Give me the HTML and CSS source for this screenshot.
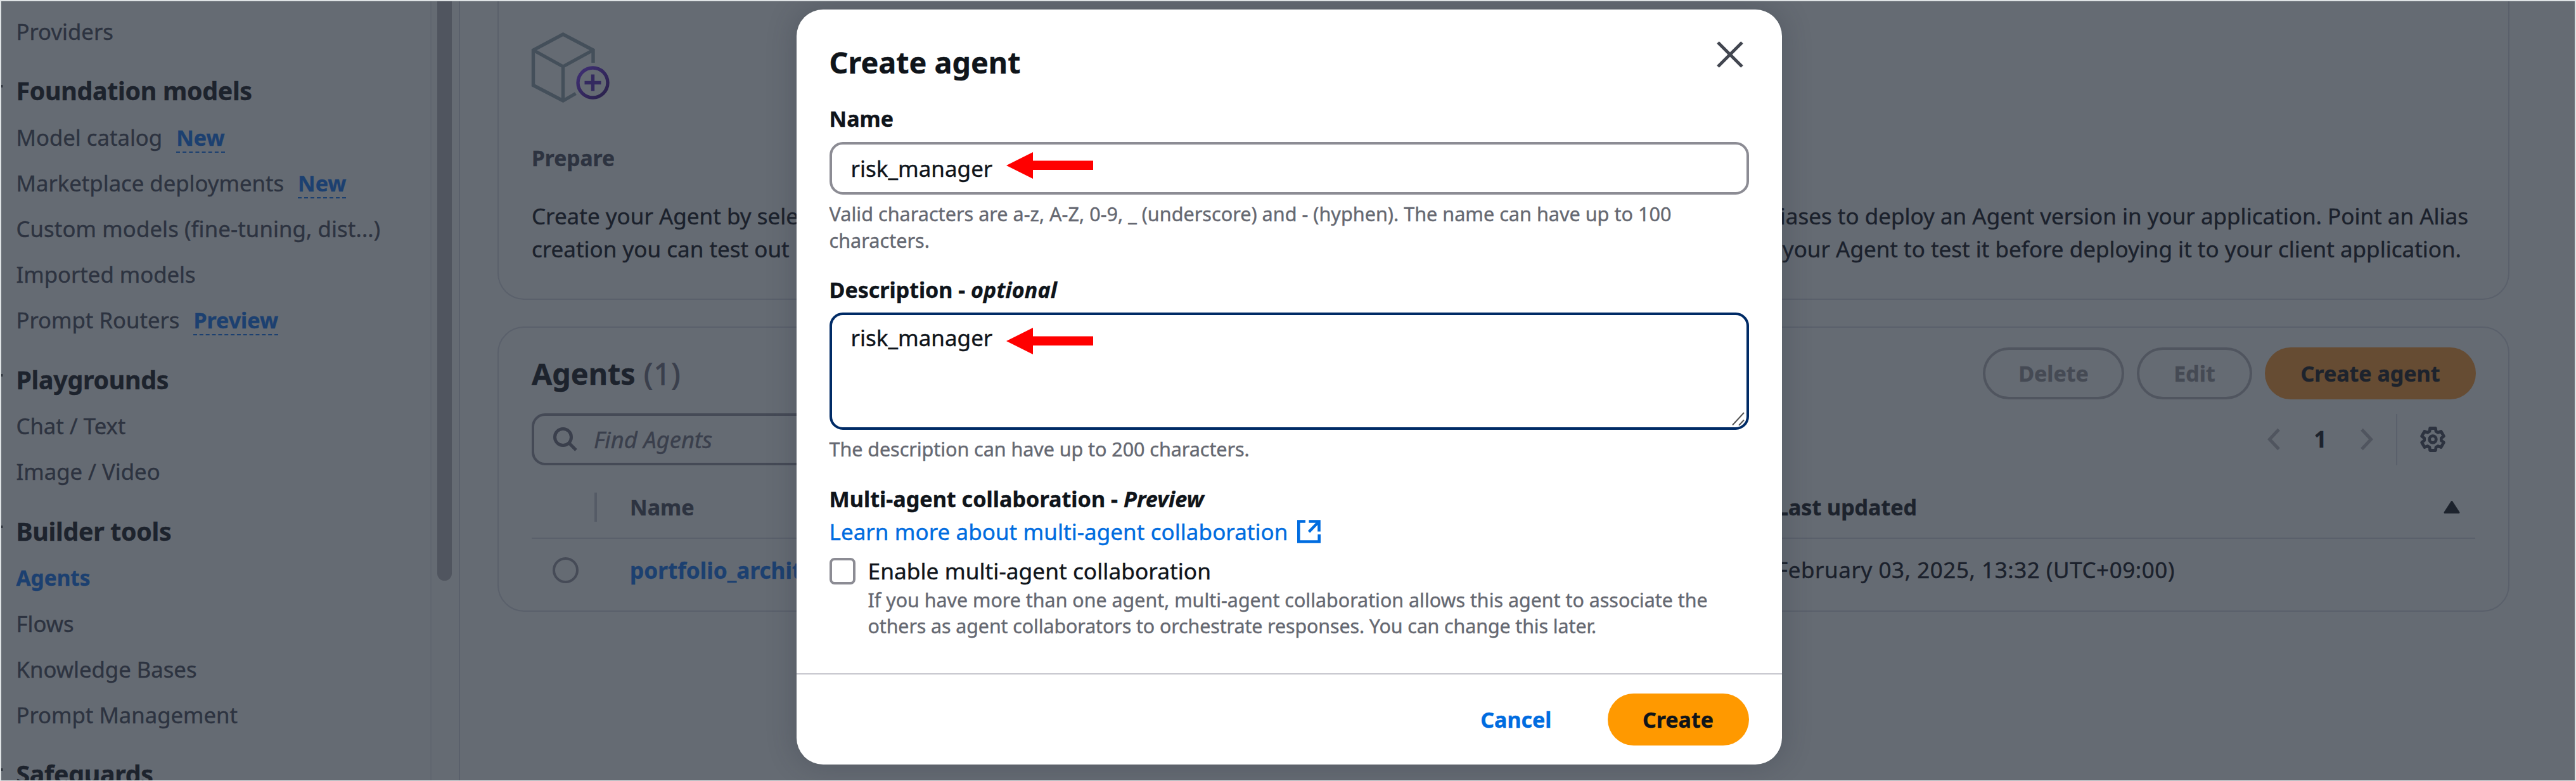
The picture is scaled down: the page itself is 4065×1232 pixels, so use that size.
FILE: index.html
```html
<!DOCTYPE html>
<html lang="en">
<head>
<meta charset="utf-8">
<title>Create agent</title>
<link rel="stylesheet" href="styles.css">
</head>
<body>
<div class="page">
  <nav class="sidebar">
    <div class="nav-list">
      <a class="nav-item">Providers</a>
      <h2 class="nav-heading">Foundation models</h2>
      <a class="nav-item">Model catalog<span class="badge">New</span></a>
      <a class="nav-item">Marketplace deployments<span class="badge">New</span></a>
      <a class="nav-item nav-item-wide">Custom models (fine-tuning, dist...)</a>
      <a class="nav-item">Imported models</a>
      <a class="nav-item">Prompt Routers<span class="badge">Preview</span></a>
      <h2 class="nav-heading">Playgrounds</h2>
      <a class="nav-item">Chat / Text</a>
      <a class="nav-item">Image / Video</a>
      <h2 class="nav-heading">Builder tools</h2>
      <a class="nav-item nav-item-active">Agents</a>
      <a class="nav-item">Flows</a>
      <a class="nav-item">Knowledge Bases</a>
      <a class="nav-item">Prompt Management</a>
      <h2 class="nav-heading">Safeguards</h2>
    </div>
    <div class="scroll-track"><div class="scroll-thumb"></div></div>
  </nav>

  <main class="main">
    <section class="card card-intro">
      <div class="intro-col">
        <svg class="cube" viewBox="0 0 124 112" fill="none">
          <defs><linearGradient id="plus" x1="0" y1="0" x2="1" y2="1"><stop offset="0" stop-color="#3f2f74"/><stop offset="1" stop-color="#29214a"/></linearGradient></defs>
          <path d="M97 49V29L49.500 4 2.500 29v55.500L49.500 109l20-11.500M2.500 29l47 26L97 29M49.500 55v54" stroke="#444f5a" stroke-width="5.400"/>
          <circle cx="96.500" cy="80.500" r="23.500" stroke="url(#plus)" stroke-width="5.400"/>
          <path d="M83.500 80.500h26M96.500 67.500v26" stroke="#33295f" stroke-width="5.400"/>
        </svg>
        <h3 class="intro-title">Prepare</h3>
        <p class="intro-text">Create your Agent by selecting<br>creation you can test out</p>
      </div>
      <div class="intro-col intro-col-right">
        <p class="intro-text">Aliases to deploy an Agent version in your application. Point an Alias</p>
        <p class="intro-text intro-text-last">your Agent to test it before deploying it to your client application.</p>
      </div>
    </section>

    <section class="card card-agents">
      <div class="agents-header">
        <h2 class="agents-title">Agents <span class="count">(1)</span></h2>
        <div class="actions">
          <button class="btn btn-disabled btn-delete">Delete</button>
          <button class="btn btn-disabled btn-edit">Edit</button>
          <button class="btn btn-dim btn-create-agent">Create agent</button>
        </div>
      </div>
      <div class="tools">
        <div class="search">
          <svg class="search-icon" viewBox="0 0 40 40" fill="none" stroke="#3a3f4c" stroke-width="5"><circle cx="16.500" cy="16.500" r="13"/><path d="M25.500 25.500L37 37"/></svg>
          <span class="placeholder">Find Agents</span>
        </div>
        <div class="pager">
          <svg class="chev" viewBox="0 0 20 36" fill="none" stroke="#50555f" stroke-width="5"><path d="M18 2.500L3.500 18 18 33.500"/></svg>
          <span class="page-number">1</span>
          <svg class="chev" viewBox="0 0 20 36" fill="none" stroke="#50555f" stroke-width="5"><path d="M2 2.500L16.500 18 2 33.500"/></svg>
          <span class="pager-rule"></span>
          <svg class="gear" viewBox="-21 -21 42 42" fill="none" stroke="#2d3340" stroke-linejoin="round"><path stroke-width="4.800" d="M-5.060-12.500L-4.350-17.500H4.350L5.060-12.500 8.300-10.630 12.980-12.520 17.330-4.980 13.360-1.870V1.870L17.330 4.980 12.980 12.520 8.300 10.630 5.060 12.500 4.350 17.500H-4.350L-5.060 12.500-8.300 10.630-12.980 12.520-17.330 4.980-13.360 1.870V-1.870L-17.330-4.980-12.980-12.520-8.300-10.630Z"/><circle r="5.300" stroke-width="4.800"/></svg>
        </div>
      </div>
      <div class="table">
        <div class="row row-head">
          <div class="cell cell-select"><span class="col-divider"></span></div>
          <div class="cell cell-name">Name</div>
          <div class="cell cell-updated">Last updated<svg class="sort" viewBox="0 0 26 22" fill="#1d232d" stroke="#1d232d" stroke-width="3" stroke-linejoin="round"><path d="M13 2.500L24 19.500H2Z"/></svg></div>
        </div>
        <div class="row">
          <div class="cell cell-radio"><span class="radio"></span></div>
          <div class="cell cell-name cell-link">portfolio_architect</div>
          <div class="cell cell-date">February 03, 2025, 13:32 (UTC+09:00)</div>
        </div>
      </div>
    </section>
  </main>

  <div class="modal" role="dialog">
    <header class="modal-header">
      <h1 class="modal-title">Create agent</h1>
      <svg class="close" viewBox="0 0 42 42" stroke="#424650" stroke-width="5"><path d="M2 2L40 40M40 2L2 40"/></svg>
    </header>
    <div class="modal-body">
      <label class="label">Name</label>
      <div class="field input">risk_manager<svg class="arrow arrow-name" viewBox="0 0 137 42" fill="#f00"><path d="M0 21L42 0V13.500H137V28H42V42Z"/></svg></div>
      <p class="hint">Valid characters are a-z, A-Z, 0-9, _ (underscore) and - (hyphen). The name can have up to 100<br>characters.</p>
      <label class="label">Description - <i>optional</i></label>
      <div class="field textarea">risk_manager<svg class="arrow arrow-desc" viewBox="0 0 137 42" fill="#f00"><path d="M0 21L42 0V13.500H137V28H42V42Z"/></svg><svg class="grip" viewBox="0 0 20 22" stroke="#555" stroke-width="2"><path d="M1 20.500L19 1M11 21L19 12.500"/></svg></div>
      <p class="hint hint-desc">The description can have up to 200 characters.</p>
      <label class="label label-multi">Multi-agent collaboration - <i>Preview</i></label>
      <a class="learn">Learn more about multi-agent collaboration<svg class="external" viewBox="0 0 37 37" fill="none" stroke="#006ce0" stroke-width="4.600"><path d="M13 2.500H2.300V34.500H34.700V23M18.500 2.500H34.500V18.500M34 3L18.500 19"/></svg></a>
      <div class="check-row">
        <span class="checkbox"></span>
        <div>
          <div class="check-label">Enable multi-agent collaboration</div>
          <p class="check-help">If you have more than one agent, multi-agent collaboration allows this agent to associate the<br><span class="help-last">others as agent collaborators to orchestrate responses. You can change this later.</span></p>
        </div>
      </div>
    </div>
    <footer class="modal-footer">
      <button class="btn-link">Cancel</button>
      <button class="btn btn-primary">Create</button>
    </footer>
  </div>
</div>
</body>
</html>
```
FILE: styles.css
```css
* { box-sizing: border-box; margin: 0; padding: 0; }
body { font-family: "Noto Sans", "Open Sans", sans-serif; font-size: 35px; line-height: 52px; background: #656b73; -webkit-text-stroke: .4px; }
button { font-family: inherit; border: 0; background: none; }
svg { display: block; flex: none; overflow: visible; }

.page { position: relative; display: flex; width: 4065px; height: 1232px; overflow: hidden; background: #656b73; border: solid #dfe3e5; border-width: 2px 2px 1px 2px; }

/* Sidebar */
.sidebar { display: flex; width: 724px; flex: none; border-right: 2px solid #5a606b; }
.nav-list { flex: 1; padding: 11.500px 0 0 23.500px; border-right: 2px solid #60666f; white-space: nowrap; }
.nav-item { display: flex; align-items: center; height: 72.2px; font-size: 34.700px; color: #2d3340; }
.nav-item-wide { letter-spacing: .12px; }
.nav-item-active { color: #1c4070; font-weight: 700; font-size: 33.400px; }
.nav-heading { position: relative; height: 60px; margin: 27.100px 0 7.700px; font-size: 39.300px; line-height: 60px; letter-spacing: -0.300px; color: #1d232d; }
.nav-heading::before { content: ""; position: absolute; left: -23.500px; top: 21px; width: 2px; height: 4px; background: #1d232d; }
.badge { margin-left: 22px; font-size: 34px; font-weight: 700; line-height: 44px; color: #1c4070; border-bottom: 2px dashed #1c4070; margin-top: 2px; }
.scroll-track { width: 43px; padding-left: 9px; }
.scroll-thumb { width: 23px; height: 914px; border-radius: 0 0 12px 12px; background: #50555f; }

/* Content */
.main { flex: 1; padding-left: 59px; }
.card { width: 3175px; border: 2px solid #5a606b; border-radius: 42px; padding: 0 52px; }
.card-intro { display: flex; justify-content: space-between; height: 471px; border-top: 0; border-radius: 0 0 42px 42px; white-space: nowrap; }
.intro-col { padding-top: 48px; }
.cube { width: 124px; height: 112px; }
.intro-title { margin: 61px 0 40px; font-size: 33.600px; color: #2d3340; }
.intro-text { line-height: 51.800px; font-size: 35px; color: #1b212c; }
.intro-col-right { padding: 313px 11px 0 0; text-align: right; }
.intro-text-last { padding-right: 11px; }

.card-agents { height: 450px; margin-top: 42px; padding-top: 31px; }
.agents-header { display: flex; align-items: center; justify-content: space-between; height: 82px; }
.agents-title { font-size: 46.700px; color: #1d232d; }
.count { margin-left: 1px; font-weight: 400; letter-spacing: 1.500px; color: #3a3f4c; -webkit-text-stroke: 1px; }
.actions { display: flex; gap: 20px; margin-right: -1px; }
.btn { height: 82px; border-radius: 41px; font-size: 34px; font-weight: 700; text-align: center; }
.btn-disabled { border: 4px solid #50555f; color: #454a54; }
.btn-delete { width: 223px; }
.btn-edit { width: 182px; }
.btn-dim { width: 333px; background: #664c33; color: #1d232d; }

.tools { display: flex; justify-content: space-between; align-items: center; margin-top: 22px; }
.search { display: flex; align-items: center; width: 1200px; height: 82px; padding-left: 29px; border: 4px solid #454a56; border-radius: 21px; }
.search-icon { width: 40px; height: 40px; }
.placeholder { margin-left: 25px; font-size: 36.400px; font-style: italic; color: #3a3f4c; }
.pager { display: flex; align-items: center; margin-right: 46px; }
.chev { width: 20px; height: 36px; }
.page-number { width: 127px; text-align: center; font-weight: 700; color: #1d232d; }
.pager-rule { width: 2px; height: 81px; margin: 0 35px 0 36px; background: #5a606b; }
.gear { width: 42px; height: 42px; }

.table { margin-top: 18px; }
.row { display: grid; grid-template-columns: 103px 1861px 1fr; height: 98px; align-items: center; }
.row-head { border-bottom: 2px solid #5a606b; font-size: 34px; font-weight: 700; color: #2d3340; }
.cell { display: flex; align-items: center; }
.cell-select { justify-content: flex-end; }
.col-divider { width: 4px; height: 46px; background: #555b66; }
.cell-name { padding-left: 52px; }
.cell-link { font-weight: 700; color: #1c4070; font-size: 35.200px; }
.cell-updated { justify-content: space-between; padding-right: 24px; color: #1d232d; }
.sort { width: 26px; height: 22px; }
.cell-radio { padding-left: 33px; }
.radio { width: 41px; height: 41px; border: 4px solid #464b57; border-radius: 50%; }
.cell-date { color: #1b212c; letter-spacing: .550px; }

/* Dialog */
.modal { position: absolute; left: 1254.500px; top: 13px; width: 1555px; height: 1191px; display: flex; flex-direction: column; border-radius: 42px; background: #fff; color: #0f141a; box-shadow: 0 0 42px 6px rgba(40, 44, 60, .22); white-space: nowrap; }
.modal-header { display: flex; justify-content: space-between; align-items: flex-start; height: 146px; padding: 50px 61px 0 52px; }
.modal-title { margin-top: 2px; font-size: 46.700px; line-height: 62px; }
.close { width: 42px; height: 42px; }
.modal-body { flex: 1; padding: 0 52px 0 52px; }
.label { display: block; font-size: 34px; font-weight: 700; }
.label-multi { font-size: 34.200px; }
.label i { letter-spacing: .15px; }
.field { position: relative; margin-top: 10px; padding-left: 30px; border: 4px solid #8c8c94; border-radius: 21px; }
.input { height: 83px; line-height: 75px; margin-top: 11px; }
.textarea { height: 185px; padding-top: 10px; border-color: #002b66; }
.arrow { position: absolute; left: 275px; width: 137px; height: 42px; }
.arrow-name { top: 12px; }
.arrow-desc { top: 20px; }
.grip { position: absolute; right: 3px; bottom: 2px; width: 20px; height: 22px; }
.hint { margin: 10px 0 31px; font-size: 30.600px; line-height: 41.500px; color: #656871; }
.hint-desc { letter-spacing: -.1px; }
.learn { display: flex; align-items: center; color: #006ce0; letter-spacing: .05px; }
.external { width: 37px; height: 37px; margin-left: 14px; }
.check-row { display: flex; gap: 20px; margin-top: 9px; }
.checkbox { width: 41px; height: 42px; margin-top: 6px; border: 4px solid #8c8c94; border-radius: 8px; }
.check-label { font-size: 35.300px; }
.check-help { font-size: 30.400px; line-height: 41.500px; color: #656871; }
.help-last { letter-spacing: -.1px; }
.modal-footer { display: flex; justify-content: flex-end; align-items: center; gap: 88px; height: 144px; padding-right: 52px; border-top: 2px solid #c6c6cd; }
.btn-link { font-size: 34px; font-weight: 700; color: #006ce0; }
.btn-primary { width: 223px; background: #f90; color: #0f141a; }
```
